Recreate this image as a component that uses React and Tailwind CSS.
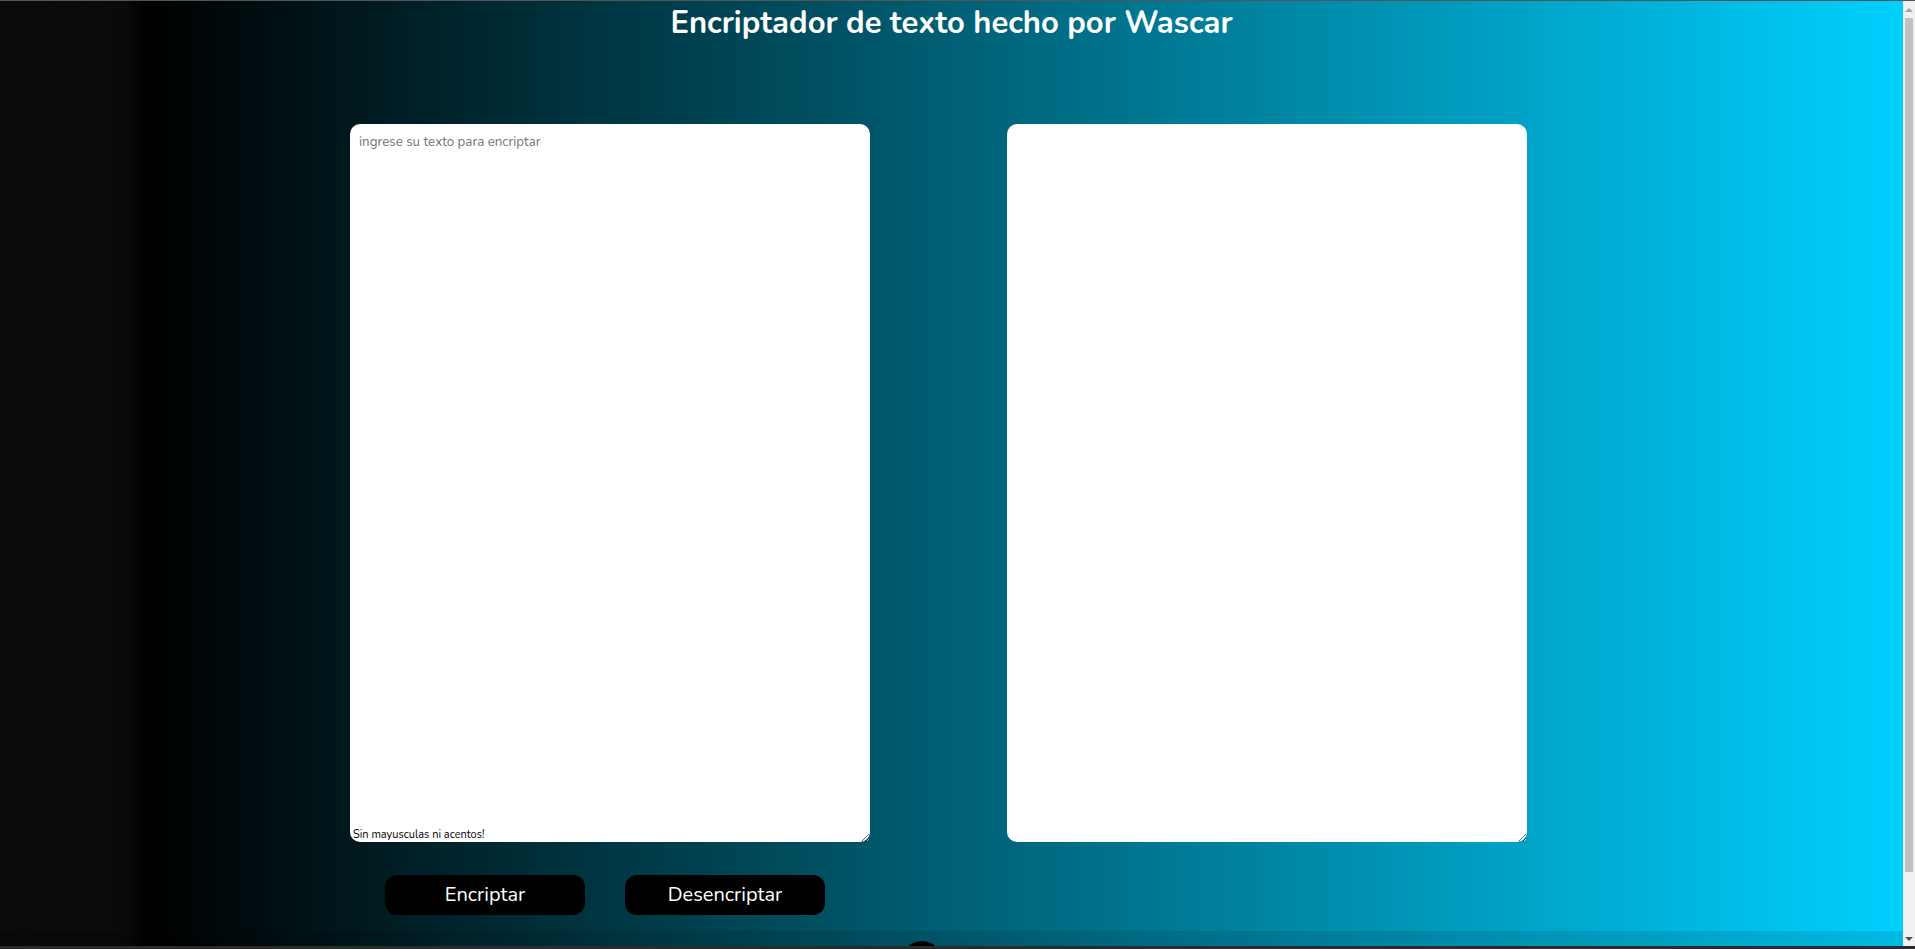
import React, { useState } from 'react';

function Scrollbar() {
  return (
    <div className="flex w-[12px] shrink-0 flex-col items-center bg-[#f1f1f1]">
      <div className="flex h-[17px] items-center justify-center">
        <div className="h-0 w-0 border-x-[4px] border-b-[4px] border-x-transparent border-b-[#a3a3a3]" />
      </div>
      <div className="h-[854px] w-[8px] bg-[#c1c1c1]" />
      <div className="flex flex-1 items-end justify-center pb-[8px]">
        <div className="h-0 w-0 border-x-[4px] border-t-[4px] border-x-transparent border-t-[#505050]" />
      </div>
    </div>
  );
}

export default function App() {
  const [input, setInput] = useState('');
  const [output, setOutput] = useState('');

  const encriptar = () => {
    const res = input
      .replace(/e/g, 'enter')
      .replace(/i/g, 'imes')
      .replace(/a/g, 'ai')
      .replace(/o/g, 'ober')
      .replace(/u/g, 'ufat');
    setOutput(res);
  };

  const desencriptar = () => {
    const res = input
      .replace(/enter/g, 'e')
      .replace(/imes/g, 'i')
      .replace(/ai/g, 'a')
      .replace(/ober/g, 'o')
      .replace(/ufat/g, 'u');
    setOutput(res);
  };

  return (
    <div className="flex h-screen overflow-hidden border-t border-[#555]">
      <div className="flex-1 overflow-hidden">
        <div
          className="min-h-screen bg-[linear-gradient(90deg,#0b0b0b_0%,#0a0a0a_6.5%,#000000_7.8%,#00d0ff_100%)] text-white"
          style={{ fontFamily: 'Nunito, Lato, "Open Sans", sans-serif' }}
        >
          <h1 className="m-0 pt-[3px] text-center text-[31px] font-bold leading-[38px]">
            Encriptador de texto hecho por Wascar
          </h1>

          <main className="flex gap-[137px] pl-[350px] pt-[82px]">
            <div className="relative">
              <textarea
                value={input}
                onChange={(e) => setInput(e.target.value)}
                placeholder="ingrese su texto para encriptar"
                className="block h-[718px] w-[520px] rounded-[10px] bg-white px-[9px] py-[9px] text-[13.33px] text-black outline-none placeholder:text-[#757575]"
              />
              <p className="absolute bottom-[1px] left-[3px] m-0 text-[11px] leading-[13px] text-black">
                Sin mayusculas ni acentos!
              </p>
            </div>
            <textarea
              value={output}
              readOnly
              className="block h-[718px] w-[520px] rounded-[10px] bg-white px-[9px] py-[9px] text-[13.33px] text-black outline-none"
            />
          </main>

          <div className="flex gap-[40px] pl-[385px] pt-[33px]">
            <button
              onClick={encriptar}
              className="h-[40px] w-[200px] rounded-[12px] bg-black text-[20px] text-white"
            >
              Encriptar
            </button>
            <button
              onClick={desencriptar}
              className="h-[40px] w-[200px] rounded-[12px] bg-black text-[20px] text-white"
            >
              Desencriptar
            </button>
          </div>

          <footer className="mt-[16px] flex h-[80px] gap-[12px] bg-black/10 pl-[902px] pt-[10px]">
            <span className="block h-[40px] w-[40px] rounded-full bg-black" />
            <span className="mt-[5px] block h-[36px] w-[36px] rounded-full bg-black" />
          </footer>
        </div>
      </div>
      <Scrollbar />
      <div className="fixed bottom-0 left-0 h-[3px] w-full bg-[#2b2b2b]" />
    </div>
  );
}
